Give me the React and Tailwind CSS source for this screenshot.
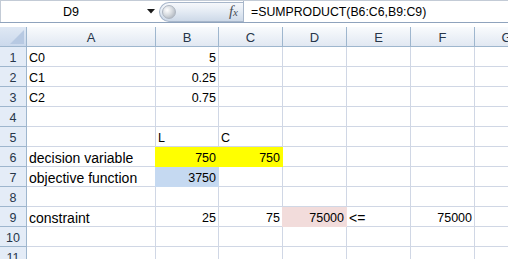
import React from "react";

const COLS = [
  { label: "A", w: "w-[129px]", wf: "w-[130px]" },
  { label: "B", w: "w-[63px]", wf: "w-[64px]" },
  { label: "C", w: "w-[64px]", wf: "w-[65px]" },
  { label: "D", w: "w-[64px]", wf: "w-[65px]" },
  { label: "E", w: "w-[64px]", wf: "w-[65px]" },
  { label: "F", w: "w-[64px]", wf: "w-[65px]" },
  { label: "G", w: "w-[64px]", wf: "w-[65px]" },
];

const L = (v) => ({ v, align: "left", size: "text-[14px]" });
const LU = (v) => ({ v, align: "left", size: "text-[12.5px]" });
const N = (v, bg) => ({ v, align: "right", size: "text-[12.5px]", bg });

const DATA = {
  1: { A: LU("C0"), B: N("5") },
  2: { A: LU("C1"), B: N("0.25") },
  3: { A: LU("C2"), B: N("0.75") },
  5: { B: LU("L"), C: LU("C") },
  6: { A: L("decision variable"), B: N("750", "yellow"), C: N("750", "yellow") },
  7: { A: L("objective function"), B: N("3750", "blue") },
  9: { A: L("constraint"), B: N("25"), C: N("75"), D: N("75000", "pink"), E: L("<="), F: N("75000") },
};

const FILL = {
  yellow: "bg-[#ffff00] border-[#ffff00]",
  blue: "bg-[#c5d9f1] border-[#c5d9f1]",
  pink: "bg-[#f2dcdb] border-[#f2dcdb]",
};

function Cell({ col, cell }) {
  const filled = cell && cell.bg;
  const base =
    "shrink-0 h-full border-r border-b flex items-end leading-[16px] overflow-visible whitespace-nowrap text-black";
  const cls = [
    base,
    filled ? col.wf + " -ml-px " + FILL[cell.bg] : col.w + " border-[#d0d7e5]",
    cell && cell.align === "right" ? "justify-end pr-[2px]" : "justify-start pl-[2px]",
    cell ? cell.size : "",
  ].join(" ");
  return <div className={cls}>{cell ? cell.v : ""}</div>;
}

function FormulaBar() {
  return (
    <div className="h-[23px] flex border-t border-b border-t-[#c3cbd6] border-b-[#8fa3bd] bg-white">
      <div className="w-[157px] shrink-0 flex items-center border-l border-[#c3cbd6]">
        <div className="w-[140px] text-center text-[12.5px] text-black leading-[16px]">D9</div>
        <svg width="8" height="5" viewBox="0 0 8 5" className="ml-[6px]">
          <path d="M0 0 L8 0 L4 4.5 Z" fill="#1a1a1a" />
        </svg>
      </div>
      <div className="w-[86px] shrink-0 flex items-center">
        <div className="h-[20px] w-[84px] ml-[2px] rounded-l-full border border-r-0 border-[#a7b6ca] bg-gradient-to-b from-[#f6f8fb] via-[#e3eaf3] to-[#cdd9e8] flex items-center justify-between pl-[2px] pr-[5px]">
          <div className="w-[14px] h-[14px] rounded-full bg-[radial-gradient(circle_at_35%_35%,#ffffff_0%,#d7dbe0_45%,#9ea6b0_100%)] border border-[#aeb6c1]" />
          <span className="font-['Liberation_Serif',serif] italic text-[15px] leading-[16px] text-[#4a4f57]">
            f<span className="text-[11px]">x</span>
          </span>
        </div>
      </div>
      <div className="flex-1 flex items-center border-l border-[#a7b6ca] pl-[7px] text-[12.3px] text-black leading-[16px]">
        =SUMPRODUCT(B6:C6,B9:C9)
      </div>
    </div>
  );
}

export default function App() {
  const rows = Array.from({ length: 11 }, (_, i) => i + 1);
  return (
    <div className="w-[508px] h-[259px] overflow-hidden bg-white font-['Liberation_Sans',Arial,sans-serif]">
      <FormulaBar />
      <div className="h-[4px] bg-white" />
      {/* Column header */}
      <div className="h-[20px] flex">
        <div className="w-[27px] shrink-0 h-full border-r border-b border-[#9eb6ce] bg-gradient-to-b from-[#dfe8f4] to-[#cbd9ec] relative">
          <svg width="14" height="14" viewBox="0 0 14 14" className="absolute right-[2px] bottom-[2px]">
            <path d="M14 0 L14 14 L0 14 Z" fill="#b7c9e2" />
          </svg>
        </div>
        {COLS.map((c) => (
          <div
            key={c.label}
            className={
              c.w +
              " shrink-0 h-full border-r border-b border-[#9eb6ce] bg-gradient-to-b from-[#f9fbfd] to-[#e1e8f2] flex items-end justify-center leading-[16px] text-[13px] text-[#27364a]"
            }
          >
            {c.label}
          </div>
        ))}
      </div>
      {rows.map((r) => (
        <div key={r} className="h-[20px] flex">
          <div className="w-[27px] shrink-0 h-full border-r border-b border-[#9eb6ce] bg-[#e4ecf7] flex items-end justify-center leading-[16px] text-[12.5px] text-[#27364a]">
            {r}
          </div>
          {COLS.map((c) => (
            <Cell key={c.label} col={c} cell={DATA[r] && DATA[r][c.label]} />
          ))}
        </div>
      ))}
    </div>
  );
}
